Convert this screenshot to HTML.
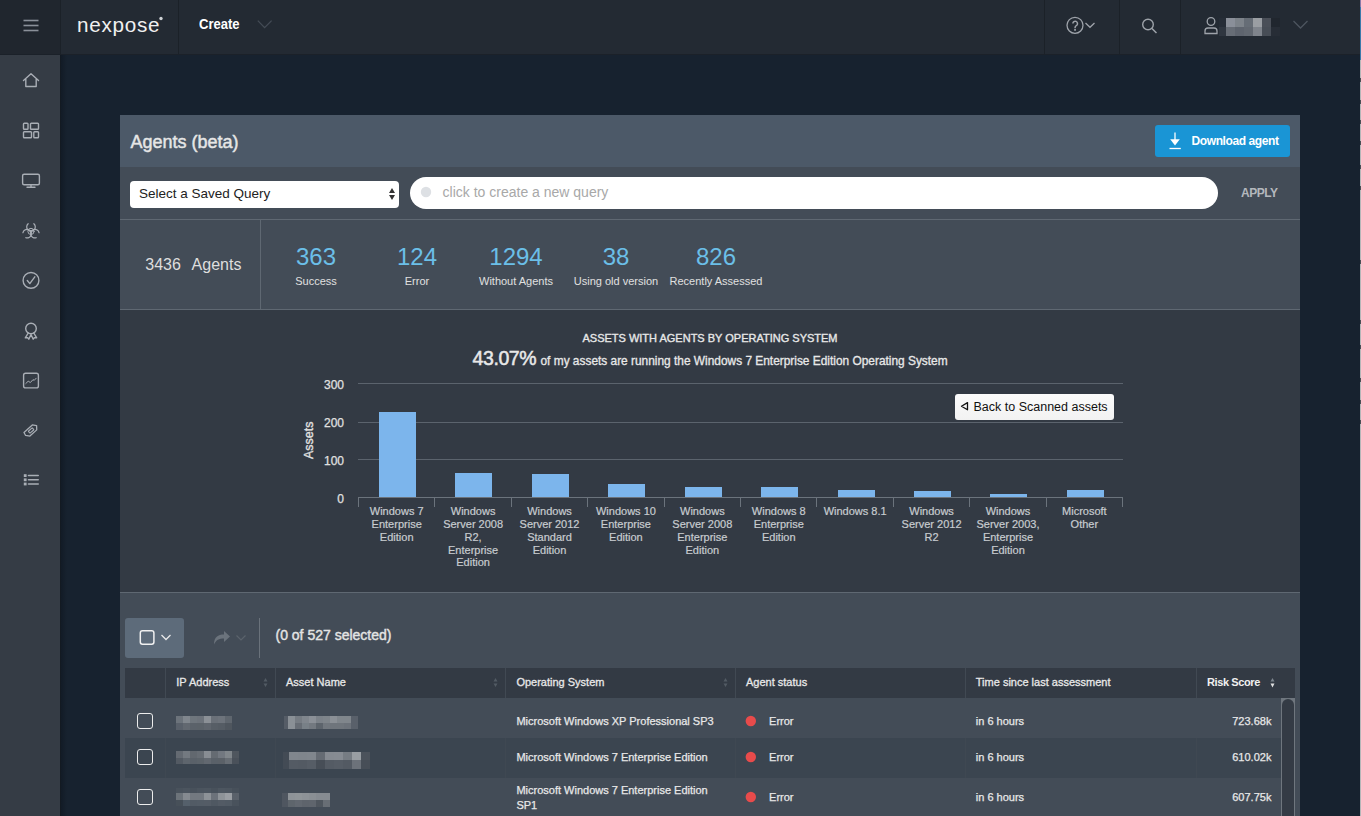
<!DOCTYPE html>
<html><head><meta charset="utf-8">
<style>
*{box-sizing:border-box;margin:0;padding:0}
html,body{width:1361px;height:816px;overflow:hidden;background:#17222f;font-family:"Liberation Sans",sans-serif;position:relative}
.abs{position:absolute}
.t{position:absolute;white-space:nowrap;line-height:1}
svg{position:absolute;overflow:visible}
</style></head><body>
<div class="abs" style="left:0px;top:0px;width:1361px;height:54px;background:#232a33;"></div>
<div class="abs" style="left:0px;top:0px;width:60px;height:54px;background:#20262e;"></div>
<div class="abs" style="left:0px;top:54px;width:1361px;height:1px;background:#1b2129;"></div>
<div class="abs" style="left:60px;top:0px;width:1px;height:54px;background:#1b2128;"></div>
<div class="abs" style="left:178px;top:0px;width:1px;height:54px;background:#1b2128;"></div>
<div class="abs" style="left:1044px;top:0px;width:1px;height:54px;background:#1b2128;"></div>
<div class="abs" style="left:1119px;top:0px;width:1px;height:54px;background:#1b2128;"></div>
<div class="abs" style="left:1180px;top:0px;width:1px;height:54px;background:#1b2128;"></div>
<div class="abs" style="left:0px;top:55px;width:60px;height:761px;background:#353c45;"></div>
<div class="abs" style="left:60px;top:55px;width:1px;height:761px;background:#131a22;"></div>
<div class="abs" style="left:61px;top:55px;width:6px;height:761px;background:linear-gradient(90deg,#121b26,#17222f);"></div>
<svg style="left:0;top:0" width="60" height="54"><g stroke="#8a9099" stroke-width="1.6"><line x1="23.5" y1="20.5" x2="38.5" y2="20.5"/><line x1="23.5" y1="25.5" x2="38.5" y2="25.5"/><line x1="23.5" y1="30.5" x2="38.5" y2="30.5"/></g></svg>
<div class="t" style="left:76.80px;top:16.15px;font-size:19.9px;color:#f0f0f0;letter-spacing:0.7px;transform:scaleX(1.04);transform-origin:0 0;">nexpose</div>
<svg style="left:158px;top:15px" width="6" height="6"><circle cx="3" cy="3.5" r="1.7" fill="#cfd2d6"/></svg>
<div class="t" style="left:199.00px;top:15.80px;font-size:15px;color:#ffffff;font-weight:bold;transform:scaleX(0.87);transform-origin:0 0;">Create</div>
<svg style="left:257px;top:19px" width="18" height="12"><polyline points="0.8,1.6 7.6,8.6 14.6,1.6" fill="none" stroke="#444c56" stroke-width="1.3"/></svg>
<svg style="left:1060px;top:12px" width="40" height="30"><circle cx="15" cy="13.3" r="8" fill="none" stroke="#9ea3aa" stroke-width="1.3"/><path d="M12.9,11.6 a2.3,2.3 0 1 1 3.9,1.6 c-0.9,0.8 -1.75,1.3 -1.75,2.5 v0.6" fill="none" stroke="#9ea3aa" stroke-width="1.5"/><rect x="14.1" y="17.1" width="1.9" height="1.6" fill="#9ea3aa"/><polyline points="25.5,11 30,15.3 34.5,11" fill="none" stroke="#9ea3aa" stroke-width="1.3"/></svg>
<svg style="left:1135px;top:12px" width="30" height="30"><circle cx="13" cy="12.5" r="5.3" fill="none" stroke="#9ea3aa" stroke-width="1.4"/><line x1="17" y1="16.5" x2="21.5" y2="21" stroke="#9ea3aa" stroke-width="1.5"/></svg>
<svg style="left:1200px;top:12px" width="24" height="26"><circle cx="11" cy="9.5" r="3.8" fill="none" stroke="#9ea3aa" stroke-width="1.3"/><path d="M5,21.5 v-2.5 a3,3 0 0 1 3,-3 h6 a3,3 0 0 1 3,3 v2.5 z" fill="none" stroke="#9ea3aa" stroke-width="1.3"/></svg>
<div class="abs" style="left:1219px;top:18px;width:7px;height:9px;background:#262d37;"></div>
<div class="abs" style="left:1219px;top:27px;width:7px;height:9px;background:#2f3640;"></div>
<div class="abs" style="left:1226px;top:18px;width:9px;height:9px;background:#8a8f99;"></div>
<div class="abs" style="left:1226px;top:27px;width:9px;height:9px;background:#676d76;"></div>
<div class="abs" style="left:1235px;top:18px;width:9px;height:9px;background:#7d838a;"></div>
<div class="abs" style="left:1235px;top:27px;width:9px;height:9px;background:#5e646e;"></div>
<div class="abs" style="left:1244px;top:18px;width:9px;height:9px;background:#666d76;"></div>
<div class="abs" style="left:1244px;top:27px;width:9px;height:9px;background:#626871;"></div>
<div class="abs" style="left:1253px;top:18px;width:9px;height:9px;background:#9a9ea3;"></div>
<div class="abs" style="left:1253px;top:27px;width:9px;height:9px;background:#7f848c;"></div>
<div class="abs" style="left:1262px;top:18px;width:9px;height:9px;background:#4a4f58;"></div>
<div class="abs" style="left:1262px;top:27px;width:9px;height:9px;background:#474d56;"></div>
<div class="abs" style="left:1271px;top:18px;width:9px;height:9px;background:#20262e;"></div>
<div class="abs" style="left:1271px;top:27px;width:9px;height:9px;background:#272d36;"></div>
<svg style="left:1292px;top:19px" width="18" height="12"><polyline points="1.5,2 8.5,9 15.5,2" fill="none" stroke="#4d555f" stroke-width="1.3"/></svg>
<svg style="left:0;top:54px" width="60" height="500" fill="none" stroke="#a9aeb5" stroke-width="1.4" stroke-linejoin="round" stroke-linecap="round">
<path d="M23.5,26.5 L31,19.8 L38.5,26.5 M25.8,25 V32.5 H36.2 V25"/>
<rect x="23.5" y="69.3" width="4.5" height="6" rx="0.8"/><rect x="30.5" y="69.3" width="8" height="6" rx="0.8"/>
<rect x="23.5" y="77.8" width="8" height="6" rx="0.8"/><rect x="33.8" y="77.8" width="4.7" height="6" rx="0.8"/>
<rect x="22.6" y="120.2" width="16.8" height="10.6" rx="1.5"/><line x1="31" y1="131" x2="31" y2="133"/><line x1="27" y1="133.2" x2="35" y2="133.2"/>
<g stroke-width="1.2"><path d="M33.88,169.70 A4.3,4.3 0 1 1 28.12,169.70"/><path d="M36.23,183.74 A4.3,4.3 0 1 1 39.10,178.76"/><path d="M22.90,178.76 A4.3,4.3 0 1 1 25.77,183.74"/><circle cx="31" cy="177.4" r="3.1" stroke-width="1"/><circle cx="31" cy="177.4" r="1.4" fill="#a9aeb5" stroke="none"/></g>
<circle cx="31" cy="226.4" r="7.9"/><polyline points="27.3,226.5 29.8,229.6 34.8,222.8"/>
<circle cx="31" cy="274.5" r="5.3"/><path d="M28.2,279 L25.3,283.8 L27.6,283.6 L28.8,285.2 L31,280.5 L33.2,285.2 L34.4,283.6 L36.7,283.8 L33.8,279"/>
<rect x="23.6" y="319.3" width="14.8" height="14.6" rx="2"/><polyline points="25.8,329.5 28.2,327.2 30.4,328.5 33,325.6 34.2,326.4 36.2,324.2" stroke-width="1"/>
<g transform="translate(31.1,376.5) rotate(-42)"><path d="M-6.6,-3.3 H4.6 L7.4,0 L4.6,3.3 H-4.6 L-7.4,0 Z" stroke-width="1.3"/><rect x="-2.6" y="-1.3" width="5.2" height="2.6" rx="0.4" stroke-width="1.1"/></g>
<g stroke-width="1.6"><line x1="28.5" y1="421.5" x2="38.2" y2="421.5"/><line x1="28.5" y1="425.8" x2="38.2" y2="425.8"/><line x1="28.5" y1="430" x2="38.2" y2="430"/></g>
<g fill="#a9aeb5" stroke="none"><rect x="23.8" y="420.2" width="2.8" height="2.8"/><rect x="23.8" y="424.4" width="2.8" height="2.8"/><rect x="23.8" y="428.6" width="2.8" height="2.8"/></g>
</svg>
<div class="abs" style="left:120px;top:115px;width:1180px;height:701px;background:#434c57;"></div>
<div class="abs" style="left:120px;top:115px;width:1180px;height:52px;background:#4c5968;"></div>
<div class="t" style="left:130.50px;top:132.76px;font-size:18px;color:#e6e6e6;-webkit-text-stroke:0.45px #e6e6e6;">Agents (beta)</div>
<div class="abs" style="left:1155px;top:125px;width:135px;height:32px;background:#1a95d5;border-radius:3px;"></div>
<svg style="left:1165px;top:128px" width="20" height="24"><line x1="10" y1="4.5" x2="10" y2="14" stroke="#fff" stroke-width="1.3"/><path d="M5.2,11.2 L14.8,11.2 L10,17.5 Z" fill="#fff"/><line x1="4.5" y1="20.5" x2="15.8" y2="20.5" stroke="#fff" stroke-width="1.3"/></svg>
<div class="t" style="left:1191.50px;top:135.14px;font-size:12px;color:#ffffff;font-weight:bold;letter-spacing:-0.4px;">Download agent</div>
<div class="abs" style="left:130px;top:180.5px;width:269px;height:27px;background:#ffffff;border-radius:4px;"></div>
<div class="t" style="left:139.00px;top:186.77px;font-size:13.5px;color:#222222;">Select a Saved Query</div>
<svg style="left:385px;top:185px" width="14" height="18"><path d="M4,8 L7,3 L10,8 Z M4,10 L7,15 L10,10 Z" fill="#333"/></svg>
<div class="abs" style="left:410px;top:177px;width:808px;height:32px;background:#ffffff;border-radius:16px;"></div>
<svg style="left:415px;top:182px" width="20" height="20"><circle cx="11" cy="10" r="5.2" fill="#dde0e4"/></svg>
<div class="t" style="left:442.60px;top:184.85px;font-size:14px;color:#a8a8a8;">click to create a new query</div>
<div class="t" style="left:1241.00px;top:186.84px;font-size:12px;color:#b4b8bd;font-weight:bold;letter-spacing:-0.5px;">APPLY</div>
<div class="abs" style="left:120px;top:219px;width:1180px;height:1px;background:#5f6872;"></div>
<div class="abs" style="left:260px;top:220px;width:1px;height:89px;background:#5f6872;"></div>
<div class="t" style="left:145.30px;top:257.46px;font-size:16px;color:#dedede;">3436</div>
<div class="t" style="left:191.60px;top:257.46px;font-size:16px;color:#dedede;">Agents</div>
<div class="t" style="left:16.00px;width:600px;text-align:center;top:245.18px;font-size:24px;color:#6bbfe8;">363</div>
<div class="t" style="left:16.00px;width:600px;text-align:center;top:275.99px;font-size:11px;color:#e0e0e0;">Success</div>
<div class="t" style="left:117.00px;width:600px;text-align:center;top:245.18px;font-size:24px;color:#6bbfe8;">124</div>
<div class="t" style="left:117.00px;width:600px;text-align:center;top:275.99px;font-size:11px;color:#e0e0e0;">Error</div>
<div class="t" style="left:216.00px;width:600px;text-align:center;top:245.18px;font-size:24px;color:#6bbfe8;">1294</div>
<div class="t" style="left:216.00px;width:600px;text-align:center;top:275.99px;font-size:11px;color:#e0e0e0;">Without Agents</div>
<div class="t" style="left:316.00px;width:600px;text-align:center;top:245.18px;font-size:24px;color:#6bbfe8;">38</div>
<div class="t" style="left:316.00px;width:600px;text-align:center;top:275.99px;font-size:11px;color:#e0e0e0;">Using old version</div>
<div class="t" style="left:416.00px;width:600px;text-align:center;top:245.18px;font-size:24px;color:#6bbfe8;">826</div>
<div class="t" style="left:416.00px;width:600px;text-align:center;top:275.99px;font-size:11px;color:#e0e0e0;">Recently Assessed</div>
<div class="abs" style="left:120px;top:309px;width:1180px;height:1px;background:#5f6872;"></div>
<div class="abs" style="left:120px;top:310px;width:1180px;height:282px;background:#333a44;"></div>
<div class="abs" style="left:120px;top:592px;width:1180px;height:1px;background:#5f6872;"></div>
<div class="t" style="left:410.00px;width:600px;text-align:center;top:332.59px;font-size:11px;color:#e8e8e8;-webkit-text-stroke:0.35px #e8e8e8;">ASSETS WITH AGENTS BY OPERATING SYSTEM</div>
<div class="t" style="left:472.50px;top:349.29px;font-size:19.5px;color:#e8e8e8;-webkit-text-stroke:0.5px #e8e8e8;letter-spacing:-0.4px;">43.07%</div>
<div class="t" style="left:540.50px;top:355.73px;font-size:11.9px;color:#e8e8e8;-webkit-text-stroke:0.3px #e8e8e8;">of my assets are running the Windows 7 Enterprise Edition Operating System</div>
<div class="abs" style="left:358px;top:383px;width:765px;height:1px;background:#5b636d;"></div>
<div class="abs" style="left:358px;top:422px;width:765px;height:1px;background:#5b636d;"></div>
<div class="abs" style="left:358px;top:459px;width:765px;height:1px;background:#5b636d;"></div>
<div class="abs" style="left:358px;top:497px;width:765px;height:1px;background:#6b737c;"></div>
<div class="abs" style="left:358px;top:497px;width:1px;height:10px;background:#6b737c;"></div>
<div class="abs" style="left:434px;top:497px;width:1px;height:10px;background:#6b737c;"></div>
<div class="abs" style="left:511px;top:497px;width:1px;height:10px;background:#6b737c;"></div>
<div class="abs" style="left:587px;top:497px;width:1px;height:10px;background:#6b737c;"></div>
<div class="abs" style="left:664px;top:497px;width:1px;height:10px;background:#6b737c;"></div>
<div class="abs" style="left:740px;top:497px;width:1px;height:10px;background:#6b737c;"></div>
<div class="abs" style="left:816px;top:497px;width:1px;height:10px;background:#6b737c;"></div>
<div class="abs" style="left:893px;top:497px;width:1px;height:10px;background:#6b737c;"></div>
<div class="abs" style="left:969px;top:497px;width:1px;height:10px;background:#6b737c;"></div>
<div class="abs" style="left:1046px;top:497px;width:1px;height:10px;background:#6b737c;"></div>
<div class="abs" style="left:1122px;top:497px;width:1px;height:10px;background:#6b737c;"></div>
<div class="t" style="left:-256.00px;width:600px;text-align:right;top:379.04px;font-size:12px;color:#e0e0e0;-webkit-text-stroke:0.25px #e0e0e0;">300</div>
<div class="t" style="left:-256.00px;width:600px;text-align:right;top:417.04px;font-size:12px;color:#e0e0e0;-webkit-text-stroke:0.25px #e0e0e0;">200</div>
<div class="t" style="left:-256.00px;width:600px;text-align:right;top:455.04px;font-size:12px;color:#e0e0e0;-webkit-text-stroke:0.25px #e0e0e0;">100</div>
<div class="t" style="left:-256.00px;width:600px;text-align:right;top:493.04px;font-size:12px;color:#e0e0e0;-webkit-text-stroke:0.25px #e0e0e0;">0</div>
<div class="t" style="left:279px;top:434px;width:60px;text-align:center;font-size:12.5px;-webkit-text-stroke:0.35px #e0e0e0;color:#e0e0e0;transform:rotate(-90deg);">Assets</div>
<div class="abs" style="left:379.0px;top:412.0px;width:37px;height:85.0px;background:#7cb5ec;"></div>
<div class="abs" style="left:455.4px;top:472.7px;width:37px;height:24.3px;background:#7cb5ec;"></div>
<div class="abs" style="left:531.8px;top:473.8px;width:37px;height:23.2px;background:#7cb5ec;"></div>
<div class="abs" style="left:608.2px;top:483.8px;width:37px;height:13.2px;background:#7cb5ec;"></div>
<div class="abs" style="left:684.6px;top:486.7px;width:37px;height:10.3px;background:#7cb5ec;"></div>
<div class="abs" style="left:761.0px;top:486.7px;width:37px;height:10.3px;background:#7cb5ec;"></div>
<div class="abs" style="left:837.5px;top:489.9px;width:37px;height:7.1px;background:#7cb5ec;"></div>
<div class="abs" style="left:913.9px;top:491.0px;width:37px;height:6.0px;background:#7cb5ec;"></div>
<div class="abs" style="left:990.3px;top:493.6px;width:37px;height:3.4px;background:#7cb5ec;"></div>
<div class="abs" style="left:1066.7px;top:489.9px;width:37px;height:7.1px;background:#7cb5ec;"></div>
<div class="t" style="left:96.70px;width:600px;text-align:center;top:505.99px;font-size:11px;color:#c8ccd0;-webkit-text-stroke:0.2px #c8ccd0;">Windows 7</div>
<div class="t" style="left:96.70px;width:600px;text-align:center;top:518.84px;font-size:11px;color:#c8ccd0;-webkit-text-stroke:0.2px #c8ccd0;">Enterprise</div>
<div class="t" style="left:96.70px;width:600px;text-align:center;top:531.69px;font-size:11px;color:#c8ccd0;-webkit-text-stroke:0.2px #c8ccd0;">Edition</div>
<div class="t" style="left:173.11px;width:600px;text-align:center;top:505.99px;font-size:11px;color:#c8ccd0;-webkit-text-stroke:0.2px #c8ccd0;">Windows</div>
<div class="t" style="left:173.11px;width:600px;text-align:center;top:518.84px;font-size:11px;color:#c8ccd0;-webkit-text-stroke:0.2px #c8ccd0;">Server 2008</div>
<div class="t" style="left:173.11px;width:600px;text-align:center;top:531.69px;font-size:11px;color:#c8ccd0;-webkit-text-stroke:0.2px #c8ccd0;">R2,</div>
<div class="t" style="left:173.11px;width:600px;text-align:center;top:544.54px;font-size:11px;color:#c8ccd0;-webkit-text-stroke:0.2px #c8ccd0;">Enterprise</div>
<div class="t" style="left:173.11px;width:600px;text-align:center;top:557.39px;font-size:11px;color:#c8ccd0;-webkit-text-stroke:0.2px #c8ccd0;">Edition</div>
<div class="t" style="left:249.52px;width:600px;text-align:center;top:505.99px;font-size:11px;color:#c8ccd0;-webkit-text-stroke:0.2px #c8ccd0;">Windows</div>
<div class="t" style="left:249.52px;width:600px;text-align:center;top:518.84px;font-size:11px;color:#c8ccd0;-webkit-text-stroke:0.2px #c8ccd0;">Server 2012</div>
<div class="t" style="left:249.52px;width:600px;text-align:center;top:531.69px;font-size:11px;color:#c8ccd0;-webkit-text-stroke:0.2px #c8ccd0;">Standard</div>
<div class="t" style="left:249.52px;width:600px;text-align:center;top:544.54px;font-size:11px;color:#c8ccd0;-webkit-text-stroke:0.2px #c8ccd0;">Edition</div>
<div class="t" style="left:325.93px;width:600px;text-align:center;top:505.99px;font-size:11px;color:#c8ccd0;-webkit-text-stroke:0.2px #c8ccd0;">Windows 10</div>
<div class="t" style="left:325.93px;width:600px;text-align:center;top:518.84px;font-size:11px;color:#c8ccd0;-webkit-text-stroke:0.2px #c8ccd0;">Enterprise</div>
<div class="t" style="left:325.93px;width:600px;text-align:center;top:531.69px;font-size:11px;color:#c8ccd0;-webkit-text-stroke:0.2px #c8ccd0;">Edition</div>
<div class="t" style="left:402.34px;width:600px;text-align:center;top:505.99px;font-size:11px;color:#c8ccd0;-webkit-text-stroke:0.2px #c8ccd0;">Windows</div>
<div class="t" style="left:402.34px;width:600px;text-align:center;top:518.84px;font-size:11px;color:#c8ccd0;-webkit-text-stroke:0.2px #c8ccd0;">Server 2008</div>
<div class="t" style="left:402.34px;width:600px;text-align:center;top:531.69px;font-size:11px;color:#c8ccd0;-webkit-text-stroke:0.2px #c8ccd0;">Enterprise</div>
<div class="t" style="left:402.34px;width:600px;text-align:center;top:544.54px;font-size:11px;color:#c8ccd0;-webkit-text-stroke:0.2px #c8ccd0;">Edition</div>
<div class="t" style="left:478.75px;width:600px;text-align:center;top:505.99px;font-size:11px;color:#c8ccd0;-webkit-text-stroke:0.2px #c8ccd0;">Windows 8</div>
<div class="t" style="left:478.75px;width:600px;text-align:center;top:518.84px;font-size:11px;color:#c8ccd0;-webkit-text-stroke:0.2px #c8ccd0;">Enterprise</div>
<div class="t" style="left:478.75px;width:600px;text-align:center;top:531.69px;font-size:11px;color:#c8ccd0;-webkit-text-stroke:0.2px #c8ccd0;">Edition</div>
<div class="t" style="left:555.16px;width:600px;text-align:center;top:505.99px;font-size:11px;color:#c8ccd0;-webkit-text-stroke:0.2px #c8ccd0;">Windows 8.1</div>
<div class="t" style="left:631.57px;width:600px;text-align:center;top:505.99px;font-size:11px;color:#c8ccd0;-webkit-text-stroke:0.2px #c8ccd0;">Windows</div>
<div class="t" style="left:631.57px;width:600px;text-align:center;top:518.84px;font-size:11px;color:#c8ccd0;-webkit-text-stroke:0.2px #c8ccd0;">Server 2012</div>
<div class="t" style="left:631.57px;width:600px;text-align:center;top:531.69px;font-size:11px;color:#c8ccd0;-webkit-text-stroke:0.2px #c8ccd0;">R2</div>
<div class="t" style="left:707.98px;width:600px;text-align:center;top:505.99px;font-size:11px;color:#c8ccd0;-webkit-text-stroke:0.2px #c8ccd0;">Windows</div>
<div class="t" style="left:707.98px;width:600px;text-align:center;top:518.84px;font-size:11px;color:#c8ccd0;-webkit-text-stroke:0.2px #c8ccd0;">Server 2003,</div>
<div class="t" style="left:707.98px;width:600px;text-align:center;top:531.69px;font-size:11px;color:#c8ccd0;-webkit-text-stroke:0.2px #c8ccd0;">Enterprise</div>
<div class="t" style="left:707.98px;width:600px;text-align:center;top:544.54px;font-size:11px;color:#c8ccd0;-webkit-text-stroke:0.2px #c8ccd0;">Edition</div>
<div class="t" style="left:784.39px;width:600px;text-align:center;top:505.99px;font-size:11px;color:#c8ccd0;-webkit-text-stroke:0.2px #c8ccd0;">Microsoft</div>
<div class="t" style="left:784.39px;width:600px;text-align:center;top:518.84px;font-size:11px;color:#c8ccd0;-webkit-text-stroke:0.2px #c8ccd0;">Other</div>
<div class="abs" style="left:955px;top:394px;width:159px;height:26px;background:linear-gradient(#fbfbfb,#f2f2f2);border-radius:3px;"></div>
<svg style="left:958px;top:400px" width="14" height="14"><path d="M3.5,6.2 L9.5,2.6 L9.5,9.8 Z" fill="none" stroke="#111" stroke-width="1.3" stroke-linejoin="round"/></svg>
<div class="t" style="left:973.50px;top:401.02px;font-size:12.5px;color:#111111;">Back to Scanned assets</div>
<div class="abs" style="left:125px;top:618px;width:59px;height:40px;background:#5d6b7a;border-radius:3px;"></div>
<svg style="left:125px;top:618px" width="60" height="40"><rect x="15.3" y="12.7" width="13.6" height="13.6" rx="2.2" fill="none" stroke="#f0f0f0" stroke-width="1.5"/><polyline points="36.5,17 41,21.5 45.5,17" fill="none" stroke="#e8e8e8" stroke-width="1.3"/></svg>
<svg style="left:210px;top:625px" width="40" height="25"><path d="M4,19.5 C4,12 8,9.5 14,9.5 V6 L20,11.5 L14,17 V13.5 C9,13.5 6,15 4,19.5 Z" fill="#6b737c"/><polyline points="26.5,10.5 31,15 35.5,10.5" fill="none" stroke="#5b636c" stroke-width="1.2"/></svg>
<div class="abs" style="left:259px;top:618px;width:1px;height:40px;background:#6a727b;"></div>
<div class="t" style="left:275.50px;top:627.85px;font-size:14px;color:#e4e4e4;-webkit-text-stroke:0.4px #e4e4e4;">(0 of 527 selected)</div>
<div class="abs" style="left:125px;top:668px;width:1170px;height:30px;background:#333a44;"></div>
<div class="abs" style="left:125px;top:738px;width:1156px;height:40px;background:#3b4550;"></div>
<div class="abs" style="left:165px;top:668px;width:1px;height:30px;background:#414953;"></div>
<div class="abs" style="left:165px;top:738px;width:1px;height:40px;background:#3f4852;"></div>
<div class="abs" style="left:275px;top:668px;width:1px;height:30px;background:#414953;"></div>
<div class="abs" style="left:275px;top:738px;width:1px;height:40px;background:#3f4852;"></div>
<div class="abs" style="left:505px;top:668px;width:1px;height:30px;background:#414953;"></div>
<div class="abs" style="left:505px;top:738px;width:1px;height:40px;background:#3f4852;"></div>
<div class="abs" style="left:735px;top:668px;width:1px;height:30px;background:#414953;"></div>
<div class="abs" style="left:735px;top:738px;width:1px;height:40px;background:#3f4852;"></div>
<div class="abs" style="left:965px;top:668px;width:1px;height:30px;background:#414953;"></div>
<div class="abs" style="left:965px;top:738px;width:1px;height:40px;background:#3f4852;"></div>
<div class="abs" style="left:1196px;top:668px;width:1px;height:30px;background:#414953;"></div>
<div class="abs" style="left:1196px;top:738px;width:1px;height:40px;background:#3f4852;"></div>
<div class="t" style="left:176.30px;top:676.69px;font-size:11px;color:#e8e8e8;-webkit-text-stroke:0.3px #e8e8e8;">IP Address</div>
<div class="t" style="left:286.00px;top:676.69px;font-size:11px;color:#e8e8e8;-webkit-text-stroke:0.3px #e8e8e8;">Asset Name</div>
<div class="t" style="left:516.40px;top:676.99px;font-size:11px;color:#e8e8e8;-webkit-text-stroke:0.3px #e8e8e8;">Operating System</div>
<div class="t" style="left:746.00px;top:676.99px;font-size:11px;color:#e8e8e8;-webkit-text-stroke:0.3px #e8e8e8;">Agent status</div>
<div class="t" style="left:975.80px;top:676.99px;font-size:11px;color:#e8e8e8;-webkit-text-stroke:0.3px #e8e8e8;">Time since last assessment</div>
<div class="t" style="left:1207.00px;top:676.59px;font-size:11px;color:#f0f0f0;font-weight:bold;letter-spacing:-0.4px;">Risk Score</div>
<svg style="left:263px;top:677px" width="6" height="12"><path d="M0.5,4.5 L2.5,1 L4.5,4.5 Z M0.5,6.5 L2.5,10 L4.5,6.5 Z" fill="#535b64"/></svg>
<svg style="left:492.5px;top:677px" width="6" height="12"><path d="M0.5,4.5 L2.5,1 L4.5,4.5 Z M0.5,6.5 L2.5,10 L4.5,6.5 Z" fill="#535b64"/></svg>
<svg style="left:722.5px;top:677px" width="6" height="12"><path d="M0.5,4.5 L2.5,1 L4.5,4.5 Z M0.5,6.5 L2.5,10 L4.5,6.5 Z" fill="#535b64"/></svg>
<svg style="left:1269.5px;top:677px" width="6" height="12"><path d="M0.5,4.5 L2.5,1 L4.5,4.5 Z" fill="#7d858e"/><path d="M0.5,6.5 L2.5,10.5 L4.5,6.5 Z" fill="#e0e0e0"/></svg>
<div class="abs" style="left:137px;top:713.2px;width:15.5px;height:15.5px;border:1.7px solid #ececec;border-radius:3px"></div>
<div class="t" style="left:516.40px;top:715.89px;font-size:11px;color:#e8e8e8;-webkit-text-stroke:0.25px #e8e8e8;">Microsoft Windows XP Professional SP3</div>
<svg style="left:745px;top:715.0px" width="12" height="12"><circle cx="5.8" cy="6" r="5.2" fill="#e84b4b"/></svg>
<div class="t" style="left:769.10px;top:715.89px;font-size:11px;color:#e8e8e8;-webkit-text-stroke:0.25px #e8e8e8;">Error</div>
<div class="t" style="left:975.80px;top:715.89px;font-size:11px;color:#e8e8e8;-webkit-text-stroke:0.25px #e8e8e8;">in 6 hours</div>
<div class="t" style="left:671.40px;width:600px;text-align:right;top:715.89px;font-size:11px;color:#e8e8e8;-webkit-text-stroke:0.25px #e8e8e8;">723.68k</div>
<div class="abs" style="left:137px;top:749.2px;width:15.5px;height:15.5px;border:1.7px solid #ececec;border-radius:3px"></div>
<div class="t" style="left:516.40px;top:751.89px;font-size:11px;color:#e8e8e8;-webkit-text-stroke:0.25px #e8e8e8;">Microsoft Windows 7 Enterprise Edition</div>
<svg style="left:745px;top:751.0px" width="12" height="12"><circle cx="5.8" cy="6" r="5.2" fill="#e84b4b"/></svg>
<div class="t" style="left:769.10px;top:751.89px;font-size:11px;color:#e8e8e8;-webkit-text-stroke:0.25px #e8e8e8;">Error</div>
<div class="t" style="left:975.80px;top:751.89px;font-size:11px;color:#e8e8e8;-webkit-text-stroke:0.25px #e8e8e8;">in 6 hours</div>
<div class="t" style="left:671.40px;width:600px;text-align:right;top:751.89px;font-size:11px;color:#e8e8e8;-webkit-text-stroke:0.25px #e8e8e8;">610.02k</div>
<div class="abs" style="left:137px;top:789.0px;width:15.5px;height:15.5px;border:1.7px solid #ececec;border-radius:3px"></div>
<div class="t" style="left:516.40px;top:785.39px;font-size:11px;color:#e8e8e8;-webkit-text-stroke:0.25px #e8e8e8;">Microsoft Windows 7 Enterprise Edition</div>
<div class="t" style="left:516.40px;top:799.79px;font-size:11px;color:#e8e8e8;-webkit-text-stroke:0.25px #e8e8e8;">SP1</div>
<svg style="left:745px;top:790.8px" width="12" height="12"><circle cx="5.8" cy="6" r="5.2" fill="#e84b4b"/></svg>
<div class="t" style="left:769.10px;top:791.69px;font-size:11px;color:#e8e8e8;-webkit-text-stroke:0.25px #e8e8e8;">Error</div>
<div class="t" style="left:975.80px;top:791.69px;font-size:11px;color:#e8e8e8;-webkit-text-stroke:0.25px #e8e8e8;">in 6 hours</div>
<div class="t" style="left:671.40px;width:600px;text-align:right;top:791.69px;font-size:11px;color:#e8e8e8;-webkit-text-stroke:0.25px #e8e8e8;">607.75k</div>
<div class="abs" style="left:175.7px;top:716.0px;width:7px;height:7px;background:#6c737b;"></div>
<div class="abs" style="left:182.7px;top:716.0px;width:7px;height:7px;background:#80868d;"></div>
<div class="abs" style="left:189.7px;top:716.0px;width:7px;height:7px;background:#6f767d;"></div>
<div class="abs" style="left:196.7px;top:716.0px;width:7px;height:7px;background:#6d737b;"></div>
<div class="abs" style="left:203.7px;top:716.0px;width:7px;height:7px;background:#8b9096;"></div>
<div class="abs" style="left:210.7px;top:716.0px;width:7px;height:7px;background:#6a7078;"></div>
<div class="abs" style="left:217.7px;top:716.0px;width:7px;height:7px;background:#6d737b;"></div>
<div class="abs" style="left:224.7px;top:716.0px;width:7px;height:7px;background:#5f666e;"></div>
<div class="abs" style="left:175.7px;top:723.0px;width:7px;height:7px;background:#59606a;"></div>
<div class="abs" style="left:182.7px;top:723.0px;width:7px;height:7px;background:#626870;"></div>
<div class="abs" style="left:189.7px;top:723.0px;width:7px;height:7px;background:#5b626a;"></div>
<div class="abs" style="left:196.7px;top:723.0px;width:7px;height:7px;background:#5b6269;"></div>
<div class="abs" style="left:203.7px;top:723.0px;width:7px;height:7px;background:#5f656d;"></div>
<div class="abs" style="left:210.7px;top:723.0px;width:7px;height:7px;background:#575e66;"></div>
<div class="abs" style="left:217.7px;top:723.0px;width:7px;height:7px;background:#555c64;"></div>
<div class="abs" style="left:224.7px;top:723.0px;width:7px;height:7px;background:#4f565e;"></div>
<div class="abs" style="left:175.7px;top:751.0px;width:7px;height:6.5px;background:#646a72;"></div>
<div class="abs" style="left:182.7px;top:751.0px;width:7px;height:6.5px;background:#737980;"></div>
<div class="abs" style="left:189.7px;top:751.0px;width:7px;height:6.5px;background:#62686f;"></div>
<div class="abs" style="left:196.7px;top:751.0px;width:7px;height:6.5px;background:#676d74;"></div>
<div class="abs" style="left:203.7px;top:751.0px;width:7px;height:6.5px;background:#888d93;"></div>
<div class="abs" style="left:210.7px;top:751.0px;width:7px;height:6.5px;background:#656b72;"></div>
<div class="abs" style="left:217.7px;top:751.0px;width:7px;height:6.5px;background:#727880;"></div>
<div class="abs" style="left:224.7px;top:751.0px;width:7px;height:6.5px;background:#80868b;"></div>
<div class="abs" style="left:231.7px;top:751.0px;width:7px;height:6.5px;background:#4f565e;"></div>
<div class="abs" style="left:175.7px;top:757.5px;width:7px;height:6.5px;background:#535a63;"></div>
<div class="abs" style="left:182.7px;top:757.5px;width:7px;height:6.5px;background:#5e656d;"></div>
<div class="abs" style="left:189.7px;top:757.5px;width:7px;height:6.5px;background:#5a6169;"></div>
<div class="abs" style="left:196.7px;top:757.5px;width:7px;height:6.5px;background:#5c636a;"></div>
<div class="abs" style="left:203.7px;top:757.5px;width:7px;height:6.5px;background:#626870;"></div>
<div class="abs" style="left:210.7px;top:757.5px;width:7px;height:6.5px;background:#5a6169;"></div>
<div class="abs" style="left:217.7px;top:757.5px;width:7px;height:6.5px;background:#5b6168;"></div>
<div class="abs" style="left:224.7px;top:757.5px;width:7px;height:6.5px;background:#676d74;"></div>
<div class="abs" style="left:231.7px;top:757.5px;width:7px;height:6.5px;background:#4a515a;"></div>
<div class="abs" style="left:175.7px;top:788.0px;width:7px;height:5.5px;background:#49525c;"></div>
<div class="abs" style="left:182.7px;top:788.0px;width:7px;height:5.5px;background:#4b545e;"></div>
<div class="abs" style="left:189.7px;top:788.0px;width:7px;height:5.5px;background:#48515b;"></div>
<div class="abs" style="left:196.7px;top:788.0px;width:7px;height:5.5px;background:#4b545e;"></div>
<div class="abs" style="left:203.7px;top:788.0px;width:7px;height:5.5px;background:#4c555f;"></div>
<div class="abs" style="left:210.7px;top:788.0px;width:7px;height:5.5px;background:#48515b;"></div>
<div class="abs" style="left:217.7px;top:788.0px;width:7px;height:5.5px;background:#4d5660;"></div>
<div class="abs" style="left:224.7px;top:788.0px;width:7px;height:5.5px;background:#4c555f;"></div>
<div class="abs" style="left:231.7px;top:788.0px;width:7px;height:5.5px;background:#47505a;"></div>
<div class="abs" style="left:175.7px;top:793.3px;width:7px;height:6.5px;background:#6c737a;"></div>
<div class="abs" style="left:182.7px;top:793.3px;width:7px;height:6.5px;background:#858a90;"></div>
<div class="abs" style="left:189.7px;top:793.3px;width:7px;height:6.5px;background:#737980;"></div>
<div class="abs" style="left:196.7px;top:793.3px;width:7px;height:6.5px;background:#737980;"></div>
<div class="abs" style="left:203.7px;top:793.3px;width:7px;height:6.5px;background:#8d9297;"></div>
<div class="abs" style="left:210.7px;top:793.3px;width:7px;height:6.5px;background:#6c727a;"></div>
<div class="abs" style="left:217.7px;top:793.3px;width:7px;height:6.5px;background:#8e9398;"></div>
<div class="abs" style="left:224.7px;top:793.3px;width:7px;height:6.5px;background:#9a9ea3;"></div>
<div class="abs" style="left:231.7px;top:793.3px;width:7px;height:6.5px;background:#5a616a;"></div>
<div class="abs" style="left:175.7px;top:799.8px;width:7px;height:6.5px;background:#475059;"></div>
<div class="abs" style="left:182.7px;top:799.8px;width:7px;height:6.5px;background:#55606b;"></div>
<div class="abs" style="left:189.7px;top:799.8px;width:7px;height:6.5px;background:#525b65;"></div>
<div class="abs" style="left:196.7px;top:799.8px;width:7px;height:6.5px;background:#535c66;"></div>
<div class="abs" style="left:203.7px;top:799.8px;width:7px;height:6.5px;background:#545c66;"></div>
<div class="abs" style="left:210.7px;top:799.8px;width:7px;height:6.5px;background:#4f5862;"></div>
<div class="abs" style="left:217.7px;top:799.8px;width:7px;height:6.5px;background:#535b65;"></div>
<div class="abs" style="left:224.7px;top:799.8px;width:7px;height:6.5px;background:#515a64;"></div>
<div class="abs" style="left:231.7px;top:799.8px;width:7px;height:6.5px;background:#49525c;"></div>
<div class="abs" style="left:284px;top:716px;width:4px;height:13px;background:#555c66;"></div>
<div class="abs" style="left:287.7px;top:716.0px;width:7px;height:6.5px;background:#8a9096;"></div>
<div class="abs" style="left:294.7px;top:716.0px;width:7px;height:6.5px;background:#767c83;"></div>
<div class="abs" style="left:301.7px;top:716.0px;width:7px;height:6.5px;background:#80868d;"></div>
<div class="abs" style="left:308.7px;top:716.0px;width:7px;height:6.5px;background:#8b9097;"></div>
<div class="abs" style="left:315.7px;top:716.0px;width:7px;height:6.5px;background:#7c8289;"></div>
<div class="abs" style="left:322.7px;top:716.0px;width:7px;height:6.5px;background:#7f858b;"></div>
<div class="abs" style="left:329.7px;top:716.0px;width:7px;height:6.5px;background:#8b9096;"></div>
<div class="abs" style="left:336.7px;top:716.0px;width:7px;height:6.5px;background:#80868c;"></div>
<div class="abs" style="left:343.7px;top:716.0px;width:7px;height:6.5px;background:#80868c;"></div>
<div class="abs" style="left:350.7px;top:716.0px;width:7px;height:6.5px;background:#59606a;"></div>
<div class="abs" style="left:287.7px;top:722.5px;width:7px;height:6.5px;background:#8a9096;"></div>
<div class="abs" style="left:294.7px;top:722.5px;width:7px;height:6.5px;background:#676d75;"></div>
<div class="abs" style="left:301.7px;top:722.5px;width:7px;height:6.5px;background:#788087;"></div>
<div class="abs" style="left:308.7px;top:722.5px;width:7px;height:6.5px;background:#737980;"></div>
<div class="abs" style="left:315.7px;top:722.5px;width:7px;height:6.5px;background:#5d646c;"></div>
<div class="abs" style="left:322.7px;top:722.5px;width:7px;height:6.5px;background:#71777e;"></div>
<div class="abs" style="left:329.7px;top:722.5px;width:7px;height:6.5px;background:#6f757c;"></div>
<div class="abs" style="left:336.7px;top:722.5px;width:7px;height:6.5px;background:#6f757c;"></div>
<div class="abs" style="left:343.7px;top:722.5px;width:7px;height:6.5px;background:#6c727a;"></div>
<div class="abs" style="left:350.7px;top:722.5px;width:7px;height:6.5px;background:#59606a;"></div>
<div class="abs" style="left:283px;top:751.5px;width:6px;height:17px;background:#434b55;"></div>
<div class="abs" style="left:288.8px;top:751.5px;width:9px;height:8.5px;background:#80868d;"></div>
<div class="abs" style="left:297.8px;top:751.5px;width:9px;height:8.5px;background:#7f858c;"></div>
<div class="abs" style="left:306.8px;top:751.5px;width:9px;height:8.5px;background:#80868d;"></div>
<div class="abs" style="left:315.8px;top:751.5px;width:9px;height:8.5px;background:#656b73;"></div>
<div class="abs" style="left:324.8px;top:751.5px;width:9px;height:8.5px;background:#858a91;"></div>
<div class="abs" style="left:333.8px;top:751.5px;width:9px;height:8.5px;background:#868b92;"></div>
<div class="abs" style="left:342.8px;top:751.5px;width:9px;height:8.5px;background:#767c83;"></div>
<div class="abs" style="left:351.8px;top:751.5px;width:9px;height:8.5px;background:#999ea3;"></div>
<div class="abs" style="left:360.8px;top:751.5px;width:9px;height:8.5px;background:#4b525b;"></div>
<div class="abs" style="left:288.8px;top:760.0px;width:9px;height:8.5px;background:#545b64;"></div>
<div class="abs" style="left:297.8px;top:760.0px;width:9px;height:8.5px;background:#535a63;"></div>
<div class="abs" style="left:306.8px;top:760.0px;width:9px;height:8.5px;background:#565d66;"></div>
<div class="abs" style="left:315.8px;top:760.0px;width:9px;height:8.5px;background:#474e57;"></div>
<div class="abs" style="left:324.8px;top:760.0px;width:9px;height:8.5px;background:#545b64;"></div>
<div class="abs" style="left:333.8px;top:760.0px;width:9px;height:8.5px;background:#565d66;"></div>
<div class="abs" style="left:342.8px;top:760.0px;width:9px;height:8.5px;background:#535a63;"></div>
<div class="abs" style="left:351.8px;top:760.0px;width:9px;height:8.5px;background:#6c727a;"></div>
<div class="abs" style="left:360.8px;top:760.0px;width:9px;height:8.5px;background:#474e57;"></div>
<div class="abs" style="left:282px;top:793.3px;width:6px;height:13.5px;background:#4f5660;"></div>
<div class="abs" style="left:287.7px;top:793.3px;width:7px;height:6.75px;background:#8e9398;"></div>
<div class="abs" style="left:294.7px;top:793.3px;width:7px;height:6.75px;background:#909599;"></div>
<div class="abs" style="left:301.7px;top:793.3px;width:7px;height:6.75px;background:#8d9297;"></div>
<div class="abs" style="left:308.7px;top:793.3px;width:7px;height:6.75px;background:#8a8f94;"></div>
<div class="abs" style="left:315.7px;top:793.3px;width:7px;height:6.75px;background:#868b91;"></div>
<div class="abs" style="left:322.7px;top:793.3px;width:7px;height:6.75px;background:#868b91;"></div>
<div class="abs" style="left:287.7px;top:800.0px;width:7px;height:6.75px;background:#5e656c;"></div>
<div class="abs" style="left:294.7px;top:800.0px;width:7px;height:6.75px;background:#626870;"></div>
<div class="abs" style="left:301.7px;top:800.0px;width:7px;height:6.75px;background:#5e646c;"></div>
<div class="abs" style="left:308.7px;top:800.0px;width:7px;height:6.75px;background:#5f656d;"></div>
<div class="abs" style="left:315.7px;top:800.0px;width:7px;height:6.75px;background:#4f565e;"></div>
<div class="abs" style="left:322.7px;top:800.0px;width:7px;height:6.75px;background:#686e75;"></div>
<div class="abs" style="left:1281px;top:698px;width:14px;height:118px;background:#6f767e;"></div>
<div class="abs" style="left:1282px;top:699px;width:12px;height:117px;background:#343b45;border-radius:6px 6px 0 0;"></div>
<div class="abs" style="left:1360px;top:0px;width:1px;height:7px;background:#8a7aa8;"></div>
<div class="abs" style="left:1360px;top:7px;width:1px;height:53px;background:#3d7aaa;"></div>
<div class="abs" style="left:1360px;top:60px;width:1px;height:756px;background:#b4b6b8;"></div>
<div class="abs" style="left:1360px;top:78px;width:1px;height:4px;background:#4a4e55;"></div>
<div class="abs" style="left:1360px;top:100px;width:1px;height:4px;background:#4a4e55;"></div>
<div class="abs" style="left:1360px;top:120px;width:1px;height:4px;background:#4a4e55;"></div>
<div class="abs" style="left:1360px;top:141px;width:1px;height:4px;background:#4a4e55;"></div>
<div class="abs" style="left:1360px;top:165px;width:1px;height:4px;background:#4a4e55;"></div>
<div class="abs" style="left:1360px;top:186px;width:1px;height:4px;background:#4a4e55;"></div>
<div class="abs" style="left:1360px;top:260px;width:1px;height:4px;background:#4a4e55;"></div>
<div class="abs" style="left:1360px;top:320px;width:1px;height:4px;background:#4a4e55;"></div>
<div class="abs" style="left:1360px;top:345px;width:1px;height:4px;background:#4a4e55;"></div>
<div class="abs" style="left:1360px;top:378px;width:1px;height:4px;background:#4a4e55;"></div>
<div class="abs" style="left:1360px;top:400px;width:1px;height:4px;background:#4a4e55;"></div>
<div class="abs" style="left:1360px;top:420px;width:1px;height:4px;background:#4a4e55;"></div>
</body></html>
